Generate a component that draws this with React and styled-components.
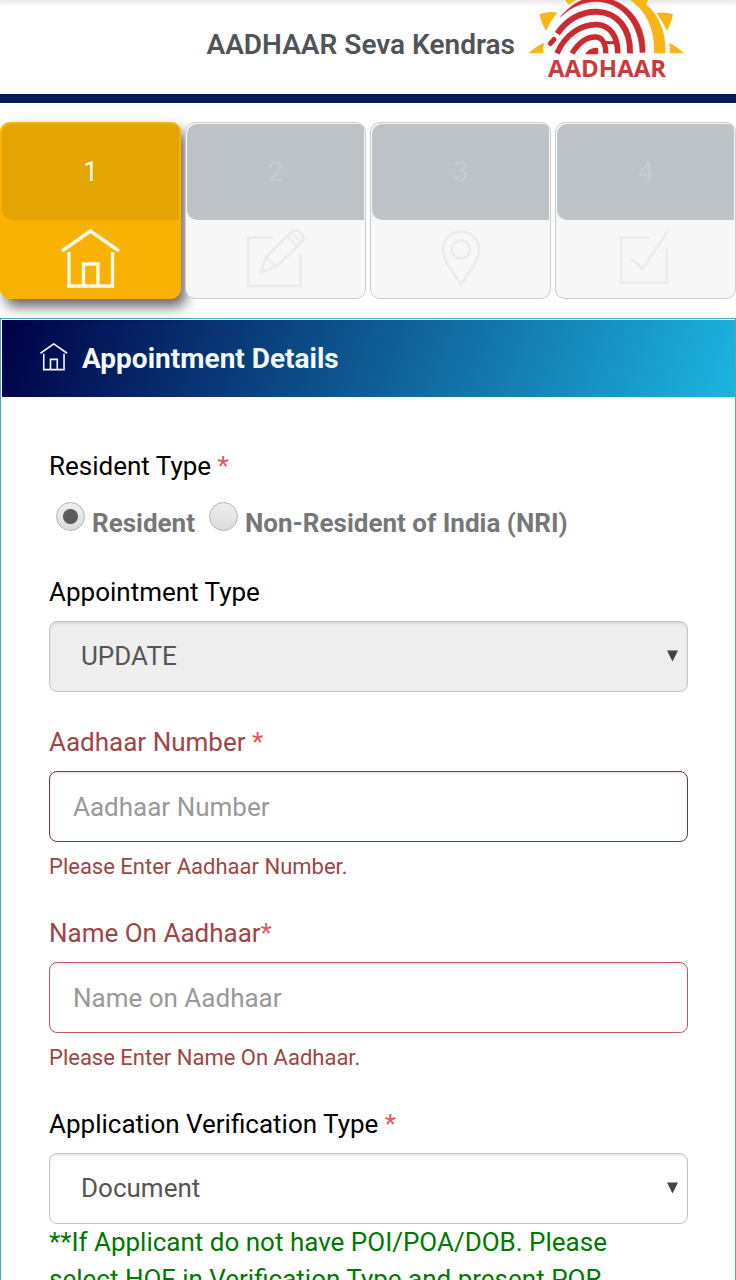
import React, { useState } from 'react';
import styled, { createGlobalStyle, css } from 'styled-components';

const steps = [
  { id: 1, name: 'Appointment details', Icon: HomeIcon },
  { id: 2, name: 'Personal details', Icon: EditIcon },
  { id: 3, name: 'Location', Icon: PinIcon },
  { id: 4, name: 'Confirmation', Icon: CheckIcon },
];

function App() {
  const [residentType, setResidentType] = useState('resident');
  const [aadhaar, setAadhaar] = useState('');
  const [name, setName] = useState('');
  const [verification, setVerification] = useState('document');

  return (
    <>
      <GlobalStyle />
      <Header>
        <Title>AADHAAR Seva Kendras</Title>
        <Logo />
      </Header>

      <Steps>
        {steps.map(({ id, name: stepName, Icon }) => (
          <Step key={id} type="button" $active={id === 1} disabled={id !== 1} aria-label={stepName}>
            <StepNumber $active={id === 1}>{id}</StepNumber>
            <StepIcon>
              <Icon />
            </StepIcon>
          </Step>
        ))}
      </Steps>

      <Panel>
        <PanelHeading>
          <HomeIcon />
          <h2>Appointment Details</h2>
        </PanelHeading>

        <Form>
          <Group as="fieldset">
            <Legend>
              Resident Type <Star>*</Star>
            </Legend>
            <Radios>
              <RadioLabel>
                <Radio
                  name="residentType"
                  checked={residentType === 'resident'}
                  onChange={() => setResidentType('resident')}
                />
                <span>Resident</span>
              </RadioLabel>
              <RadioLabel>
                <Radio
                  name="residentType"
                  checked={residentType === 'nri'}
                  onChange={() => setResidentType('nri')}
                />
                <span>Non-Resident of India (NRI)</span>
              </RadioLabel>
            </Radios>
          </Group>

          <Group>
            <Label htmlFor="appointmentType">Appointment Type</Label>
            <SelectWrap>
              <Select id="appointmentType" defaultValue="update" disabled>
                <option value="update">UPDATE</option>
              </Select>
              <Arrow />
            </SelectWrap>
          </Group>

          <Group>
            <Label htmlFor="aadhaar" $error>
              Aadhaar Number <Star>*</Star>
            </Label>
            <Input
              id="aadhaar"
              placeholder="Aadhaar Number"
              value={aadhaar}
              onChange={e => setAadhaar(e.target.value)}
              $border="#75383f"
            />
            <Help>Please Enter Aadhaar Number.</Help>
          </Group>

          <Group>
            <Label htmlFor="name" $error>
              Name On Aadhaar<Star>*</Star>
            </Label>
            <Input
              id="name"
              placeholder="Name on Aadhaar"
              value={name}
              onChange={e => setName(e.target.value)}
              $border="#c0595c"
            />
            <Help>Please Enter Name On Aadhaar.</Help>
          </Group>

          <Group>
            <Label htmlFor="verification">
              Application Verification Type <Star>*</Star>
            </Label>
            <SelectWrap>
              <Select
                id="verification"
                value={verification}
                onChange={e => setVerification(e.target.value)}
              >
                <option value="document">Document</option>
                <option value="hof">HOF</option>
              </Select>
              <Arrow />
            </SelectWrap>
            <Note>
              **If Applicant do not have POI/POA/DOB. Please select HOF in Verification Type and
              present POR
            </Note>
          </Group>
        </Form>
      </Panel>
    </>
  );
}

export default App;

function HomeIcon() {
  return (
    <svg viewBox="0 0 60 60" fill="none" stroke="currentColor" strokeWidth="3.4" aria-hidden="true">
      <path d="M1 22L29.5 2L58 22" />
      <path d="M8 23V57H51.5V23" />
      <path d="M22.5 56V35H37V56" />
    </svg>
  );
}

function EditIcon() {
  return (
    <svg viewBox="197 354 180 184" fill="none" stroke="currentColor" strokeWidth="9" aria-hidden="true">
      <path d="M277 380H202V528H362V432" />
      <path d="M241 486L256 441L333 364Q345 352 359 363L365 369Q377 381 365 395L288 470Z" />
      <path d="M256 441L288 470M321 376L352 407M333 364L364 395" strokeWidth="7" />
    </svg>
  );
}

function PinIcon() {
  return (
    <svg viewBox="197 356 180 184" fill="none" stroke="currentColor" strokeWidth="8" aria-hidden="true">
      <path d="M287 527C270 495 232 460 232 418C232 386 257 364 287 364C317 364 342 386 342 418C342 460 304 495 287 527Z" />
      <circle cx="287" cy="419" r="28" />
    </svg>
  );
}

function CheckIcon() {
  return (
    <svg viewBox="212 354 180 184" fill="none" stroke="currentColor" strokeWidth="8" aria-hidden="true">
      <path d="M311 380H226V519H366V414" />
      <path d="M257 444L291 476L369 360" />
    </svg>
  );
}

function Logo() {
  return (
    <LogoSvg viewBox="80 0 480 240" role="img" aria-label="Aadhaar">
      <g fill="#f7b516">
        <path d="M84 160C100 146 114 135 131 129Q126 144 130 160Z" />
        <path d="M117 43Q145 33 171 38Q152 60 137 93Q122 68 117 43Z" />
        <path d="M190 -8H240L204 14Z" />
        <path d="M396 -8H446L438 14Z" />
        <path d="M518 43Q493 34 468 39Q487 62 499 93Q514 69 518 43Z" />
        <path d="M551 160C536 146 522 135 506 129Q512 144 508 160Z" />
        <path d="M378 -8C436 28 464 84 461 160H495C500 84 462 16 402 -8Z" />
      </g>
      <g fill="none" stroke="#ca2a31">
        <path
          d="M181 50C220 6 256 -10 296 -8C376 -4 438 66 434 157L419 157C418 78 370 12 300 5C254 2 216 18 181 50Z"
          fill="#ca2a31"
          strokeWidth="2"
        />
        <path d="M171 101C200 58 244 34 290 35C350 37 391 84 389 160" strokeWidth="18" />
        <path d="M150 131L161 118" strokeWidth="15" strokeLinecap="round" />
        <path d="M170 160C194 105 240 73 290 74C330 76 353 110 352 160" strokeWidth="17" />
        <path d="M215 160C235 128 260 110 287 111C307 112 317 134 316 160" strokeWidth="16" />
        <path d="M310 128H347" strokeWidth="9" />
        <path d="M259 160Q270 146 291 146V160Z" fill="#ca2a31" strokeWidth="5" />
      </g>
      <LogoText x="320" y="231" textAnchor="middle">
        AADHAAR
      </LogoText>
    </LogoSvg>
  );
}

function Arrow() {
  return (
    <ArrowSvg viewBox="0 0 12 12" aria-hidden="true">
      <path d="M0 0H12L6 12Z" fill="#444" />
    </ArrowSvg>
  );
}

const GlobalStyle = createGlobalStyle`
  *,
  *::before,
  *::after {
    box-sizing: border-box;
  }

  body {
    margin: 0;
    background: #fff;
    color: #000;
    font-family: Roboto, 'Liberation Sans', sans-serif;
    font-size: 26px;
    line-height: 37px;
  }
`;

const Header = styled.header`
  display: flex;
  justify-content: flex-end;
  align-items: flex-start;
  gap: 12px;
  height: 103px;
  padding-right: 49px;
  border-bottom: 9px solid #051c58;
  box-shadow: inset 0 6px 5px -3px #e6e6e6;
`;

const Title = styled.h1`
  margin: 26px 0 0;
  color: #505357;
  font-size: 28px;
  font-weight: 600;
  line-height: 37px;
`;

const LogoSvg = styled.svg`
  width: 160px;
  height: 80px;
  overflow: visible;
`;

const LogoText = styled.text`
  fill: #ca3a3a;
  font-family: 'Open Sans', sans-serif;
  font-size: 72px;
  font-weight: 700;
`;

const Steps = styled.nav`
  display: grid;
  grid-template-columns: repeat(4, 1fr);
  gap: 4px;
  padding: 19px 0;
`;

const Step = styled.button`
  display: flex;
  flex-direction: column;
  height: 177px;
  padding: 1px;
  border: 1px solid #ccc;
  border-radius: 10px;
  background: #f7f7f7;
  color: #ebebeb;
  font-family: inherit;

  ${({ $active }) =>
    $active &&
    css`
      border-color: #f9b204;
      background: #f9b204;
      color: #fffbe6;
      box-shadow: 5px 8px 13px rgba(0, 0, 0, 0.6);
    `}
`;

const StepNumber = styled.span`
  display: flex;
  align-items: center;
  justify-content: center;
  width: 100%;
  height: 96px;
  border-radius: 10px 6px 0 10px;
  background: ${({ $active }) => ($active ? '#e3a404' : '#bdc3c7')};
  color: ${({ $active }) => ($active ? '#fffbe6' : '#c8cccf')};
  font-size: 27px;
  font-weight: 400;
`;

const StepIcon = styled.span`
  display: flex;
  align-items: center;
  justify-content: center;
  flex: 1;
  width: 100%;

  svg {
    width: 60px;
    height: 60px;
  }
`;

const Panel = styled.main`
  padding: 1px 0 0 1px;
  border: 1px solid #46a9b8;
`;

const PanelHeading = styled.header`
  display: flex;
  align-items: center;
  gap: 14px;
  padding: 20px 38px;
  background: linear-gradient(110deg, #000046, #1cb5e0);
  color: #f4faff;

  svg {
    width: 28px;
    height: 28px;
    margin-bottom: 4px;
  }

  h2 {
    margin: 0;
    font-size: 28px;
    font-weight: 700;
    line-height: 37px;
  }
`;

const Form = styled.form`
  padding: 51px 47px;
`;

const Group = styled.div`
  min-width: 0;
  margin: 0 0 32px;
  padding: 0;
  border: 0;
`;

const labelText = css`
  display: block;
  padding: 0;
  color: ${({ $error }) => ($error ? '#a04444' : '#000')};
  font-size: 26px;
  line-height: 37px;
`;

const Legend = styled.legend`
  ${labelText}
`;

const Label = styled.label`
  ${labelText}
  margin-bottom: 10px;
`;

const Star = styled.span`
  color: #e0565b;
`;

const Radios = styled.div`
  display: flex;
  flex-wrap: wrap;
  gap: 0 14px;
  padding: 20px 0 0 7px;
`;

const RadioLabel = styled.label`
  display: flex;
  align-items: flex-start;
  gap: 7px;
  color: #777;
  font-weight: 700;
`;

const Radio = styled.input.attrs({ type: 'radio' })`
  appearance: none;
  width: 29px;
  height: 29px;
  margin: -3px 0 0;
  border: 1px solid #b4b4b4;
  border-radius: 50%;
  background: linear-gradient(#eee, #dcdcdc);

  &:checked {
    background: radial-gradient(circle, #5c5c5c 7px, transparent 8px),
      linear-gradient(#eee, #dcdcdc);
  }
`;

const control = css`
  display: block;
  width: 100%;
  height: 71px;
  border-radius: 8px;
  font-family: inherit;
  font-size: 26px;
  line-height: 37px;
  color: #555;
  box-shadow: inset 0 2px 2px rgba(0, 0, 0, 0.08);
`;

const Input = styled.input`
  ${control}
  padding: 0 23px;
  border: 1px solid ${({ $border }) => $border};
  background: #fff;

  &::placeholder {
    color: #999;
    opacity: 1;
  }
`;

const SelectWrap = styled.div`
  position: relative;
`;

const Select = styled.select`
  ${control}
  appearance: none;
  padding: 0 31px;
  border: 1px solid #c4c4c4;
  background: #fff;

  &:disabled {
    background: #eee;
    opacity: 1;
  }
`;

const ArrowSvg = styled.svg`
  position: absolute;
  top: 29px;
  right: 10px;
  width: 11px;
  height: 12px;
  pointer-events: none;
`;

const Help = styled.p`
  margin: 8px 0 0;
  color: #a04444;
  font-size: 22px;
  line-height: 33px;
`;

const Note = styled.p`
  margin: 0;
  padding-right: 24px;
  color: #007800;
`;
